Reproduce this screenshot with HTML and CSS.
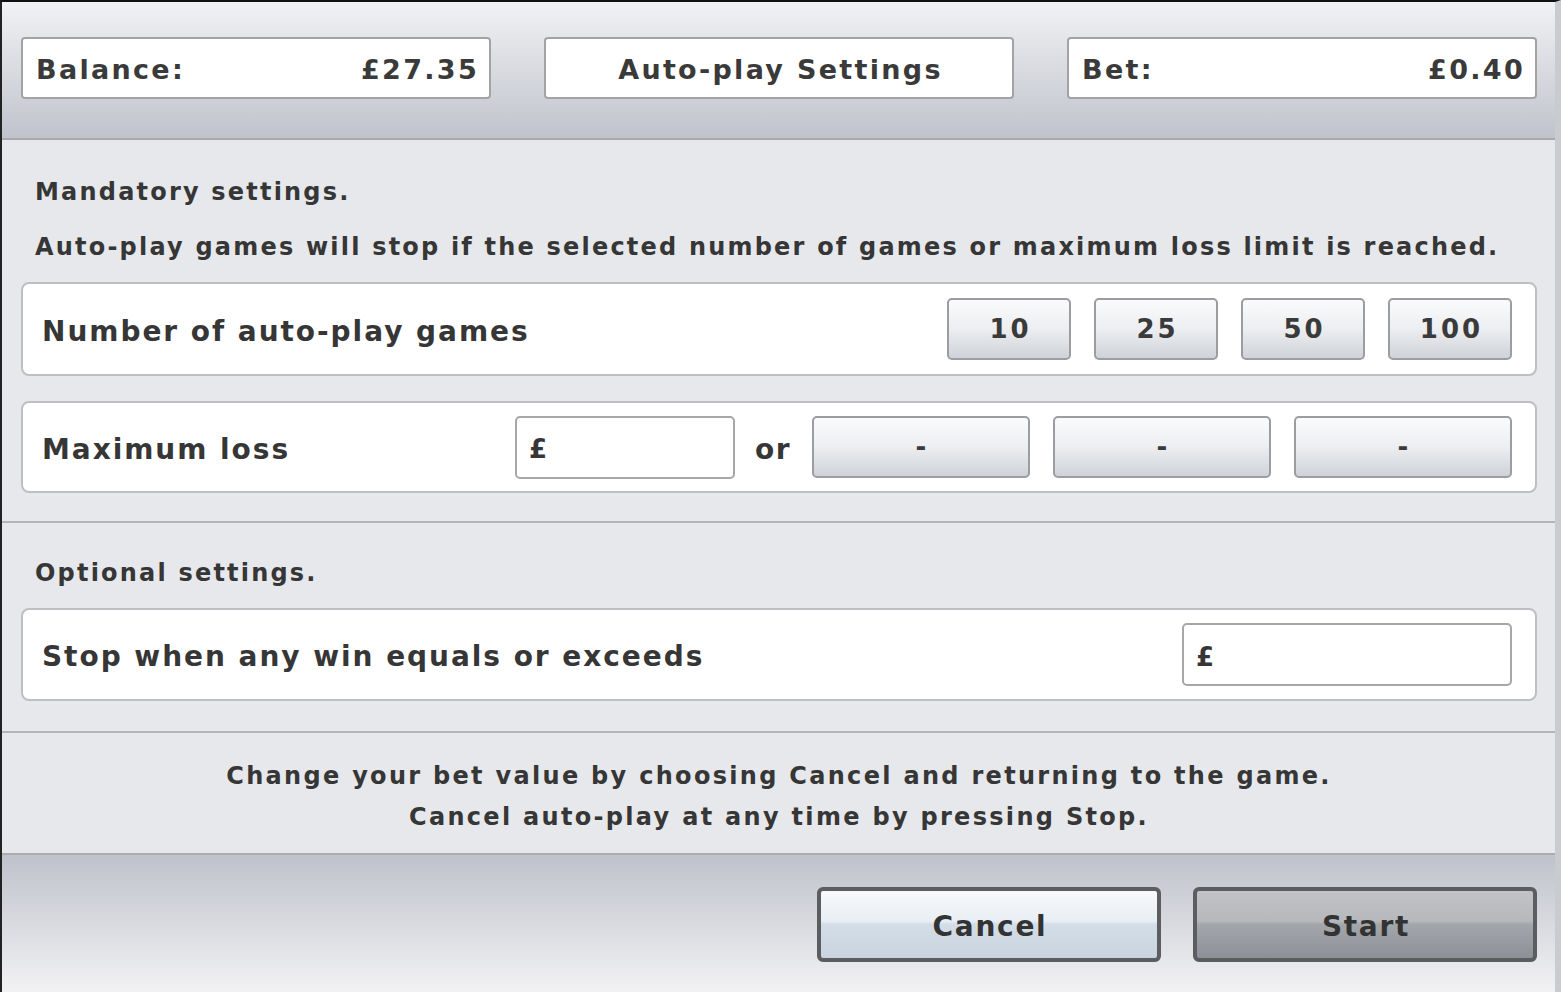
FILE: index.html
```html
<!DOCTYPE html>
<html lang="en">
<head>
  <meta charset="UTF-8" />
  <title>Auto-play Settings</title>
  <link rel="stylesheet" href="styles.css">
</head>
<body>
  <div class="dialog">
    <div class="header">
      <div class="info-box"><span>Balance:</span><span>£27.35</span></div>
      <div class="info-box title">Auto-play Settings</div>
      <div class="info-box"><span>Bet:</span><span>£0.40</span></div>
    </div>

    <div class="section mandatory">
      <p class="heading">Mandatory settings.</p>
      <p class="desc">Auto-play games will stop if the selected number of games or maximum loss limit is reached.</p>

      <div class="panel">
        <span class="label">Number of auto-play games</span>
        <div class="games">
          <button class="pick">10</button>
          <button class="pick">25</button>
          <button class="pick">50</button>
          <button class="pick">100</button>
        </div>
      </div>

      <div class="panel loss">
        <span class="label">Maximum loss</span>
        <div class="money loss-input">£</div>
        <span class="or">or</span>
        <button class="pick wide">-</button>
        <button class="pick wide">-</button>
        <button class="pick wide">-</button>
      </div>
    </div>

    <div class="section optional">
      <p class="heading">Optional settings.</p>
      <div class="panel">
        <span class="label">Stop when any win equals or exceeds</span>
        <div class="money win-input">£</div>
      </div>
    </div>

    <div class="section notes">
      <p>Change your bet value by choosing Cancel and returning to the game.</p>
      <p>Cancel auto-play at any time by pressing Stop.</p>
    </div>

    <div class="footer">
      <button class="action cancel">Cancel</button>
      <button class="action start">Start</button>
    </div>
  </div>
</body>
</html>
```

FILE: styles.css
```css
body {
  margin: 0;
  background-color: #000;
  font-family: "DejaVu Sans", Verdana, sans-serif;
  font-weight: bold;
  color: #363636;
  letter-spacing: 2.2px;
}
p {
  margin: 0;
}
.dialog {
  width: 1561px;
  height: 992px;
  box-sizing: border-box;
  border-top: 2px solid #111;
  border-left: 2px solid #222;
  border-right: 6px solid #c9cbcf;
  background-color: #e6e8eb;
  display: flex;
  flex-direction: column;
  overflow: hidden;
}
.header {
  height: 138px;
  box-sizing: border-box;
  padding: 35px 18px 0 19px;
  background: linear-gradient(#f1f2f4, #c0c3cc);
  border-bottom: 2px solid #a7a9ae;
  display: grid;
  grid-template-columns: repeat(3, 1fr);
  column-gap: 53px;
  align-items: start;
}
.info-box {
  height: 62px;
  box-sizing: border-box;
  background-color: #fff;
  border: 2px solid #a3a3a3;
  border-radius: 4px;
  display: flex;
  align-items: center;
  justify-content: space-between;
  padding: 3px 10px 0 13px;
  font-size: 27px;
  letter-spacing: 2.3px;
  color: #3a3a3a;
}
.info-box.title {
  justify-content: center;
}
.section {
  box-sizing: border-box;
  padding: 0 18px 0 19px;
  border-bottom: 2px solid #b3b5b9;
}
.mandatory {
  height: 383px;
  padding-top: 37px;
}
.optional {
  height: 210px;
  padding-top: 35px;
}
.heading {
  font-size: 24px;
  line-height: 30px;
  padding-left: 14px;
}
.desc {
  font-size: 24px;
  line-height: 30px;
  margin-top: 25px;
  padding-left: 14px;
}
.panel {
  height: 94px;
  box-sizing: border-box;
  margin-top: 20px;
  background-color: #fff;
  border: 2px solid #bdbfc3;
  border-radius: 8px;
  display: flex;
  align-items: center;
  padding: 0 23px 0 19px;
}
.optional .panel {
  height: 93px;
}
.panel.loss {
  height: 92px;
  margin-top: 25px;
}
.label {
  font-size: 28px;
  letter-spacing: 1.95px;
  flex: 1;
  padding-top: 4px;
}
.games {
  display: flex;
  gap: 23px;
}
.pick {
  font-family: inherit;
  font-weight: bold;
  font-size: 26px;
  letter-spacing: 3px;
  text-indent: 3px;
  color: #3a3a3a;
  width: 124px;
  height: 62px;
  border: 2px solid #9c9da1;
  border-radius: 5px;
  background: linear-gradient(#fbfbfc, #eceef1 50%, #cfd2d8);
  padding: 0;
}
.pick.wide {
  width: 218px;
  margin-left: 23px;
}
.money {
  height: 63px;
  box-sizing: border-box;
  border: 2px solid #a7a7a7;
  border-radius: 5px;
  background-color: #fff;
  display: flex;
  align-items: center;
  padding: 4px 0 0 12px;
  font-size: 26px;
}
.loss .label {
  flex: none;
  width: 473px;
}
.loss-input {
  width: 220px;
}
.or {
  font-size: 28px;
  letter-spacing: 1.5px;
  width: 77px;
  padding: 4px 0 0 20px;
  box-sizing: border-box;
}
.loss .pick.wide:first-of-type {
  margin-left: 0;
}
.win-input {
  width: 330px;
}
.notes {
  height: 122px;
  padding-top: 23px;
  text-align: center;
  font-size: 24px;
  letter-spacing: 2.3px;
  line-height: 41px;
  border-bottom-color: #a9abb0;
}
.footer {
  flex: 1;
  background: linear-gradient(#bfc2cb, #f2f2f4);
  display: flex;
  justify-content: flex-end;
  align-items: flex-start;
  gap: 32px;
  padding: 32px 18px 0 0;
}
.action {
  width: 344px;
  height: 75px;
  font-family: inherit;
  font-weight: bold;
  font-size: 28px;
  letter-spacing: 1.7px;
  text-indent: 2px;
  padding-top: 4px;
  color: #333;
  border: 4px solid #5c5d60;
  border-radius: 6px;
}
.cancel {
  background: linear-gradient(#f7f9fb, #e8eef4 45%, #d3dde7 50%, #cad4df);
}
.start {
  background: linear-gradient(#c2c3c5, #b6b8bb 45%, #a3a6ab 50%, #8d9197);
}
```
